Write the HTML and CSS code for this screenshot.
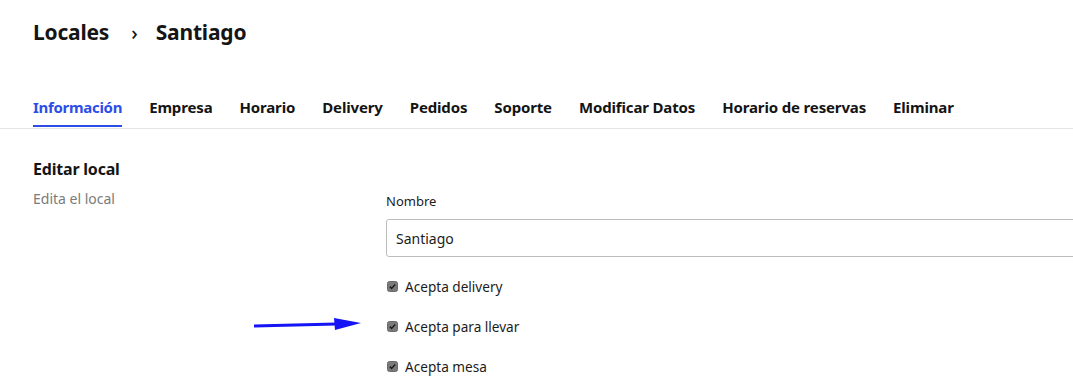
FILE: index.html
```html
<!DOCTYPE html>
<html lang="es">
<head>
<meta charset="utf-8">
<title>Locales › Santiago</title>
<link rel="stylesheet" href="styles.css">
</head>
<body>
<div class="page">
  <header class="crumbs">
    <span class="crumb">Locales</span>
    <span class="sep">›</span>
    <span class="crumb">Santiago</span>
  </header>
  <nav class="tabs">
    <a class="tab active">Información</a>
    <a class="tab">Empresa</a>
    <a class="tab">Horario</a>
    <a class="tab">Delivery</a>
    <a class="tab">Pedidos</a>
    <a class="tab">Soporte</a>
    <a class="tab">Modificar Datos</a>
    <a class="tab">Horario de reservas</a>
    <a class="tab">Eliminar</a>
  </nav>
  <section class="content">
    <div class="intro">
      <h2 class="intro-title">Editar local</h2>
      <p class="intro-desc">Edita el local</p>
    </div>
    <form class="form">
      <label class="field-label">Nombre</label>
      <div class="input">Santiago</div>
      <div class="check-row">
        <svg class="cb" viewBox="0 0 11 11"><rect x="0.5" y="0.5" width="10" height="10" rx="2" fill="#7a7a7a" stroke="#6a6a6a"/><path d="M2.8 5.6 L4.6 7.4 L8.2 3.4" fill="none" stroke="#1e1e1e" stroke-width="1.5"/></svg>
        <span>Acepta delivery</span>
      </div>
      <div class="check-row">
        <svg class="cb" viewBox="0 0 11 11"><rect x="0.5" y="0.5" width="10" height="10" rx="2" fill="#7a7a7a" stroke="#6a6a6a"/><path d="M2.8 5.6 L4.6 7.4 L8.2 3.4" fill="none" stroke="#1e1e1e" stroke-width="1.5"/></svg>
        <span>Acepta para llevar</span>
        <svg class="arrow" viewBox="0 0 110 16"><path d="M0 10 L82 8" stroke="#1414f5" stroke-width="3" fill="none"/><path d="M80 2 L107 7 L81 14 Z" fill="#1414f5"/></svg>
      </div>
      <div class="check-row">
        <svg class="cb" viewBox="0 0 11 11"><rect x="0.5" y="0.5" width="10" height="10" rx="2" fill="#7a7a7a" stroke="#6a6a6a"/><path d="M2.8 5.6 L4.6 7.4 L8.2 3.4" fill="none" stroke="#1e1e1e" stroke-width="1.5"/></svg>
        <span>Acepta mesa</span>
      </div>
    </form>
  </section>
</div>
</body>
</html>
```

FILE: styles.css
```css
html, body {
  margin: 0;
  padding: 0;
  background: #ffffff;
  overflow: hidden;
}
body {
  font-family: "Noto Sans", "Open Sans", sans-serif;
  color: #151515;
}
.page {
  width: 1073px;
  height: 389px;
  overflow: hidden;
}
.crumbs {
  display: flex;
  align-items: baseline;
  padding: 18px 0 0 33px;
  height: 76px;
  box-sizing: border-box;
}
.crumb {
  font-size: 21px;
  font-weight: 700;
  letter-spacing: -0.2px;
}
.sep {
  font-size: 20px;
  font-weight: 500;
  margin: 0 18px 0 22px;
}
.tabs {
  display: flex;
  gap: 27px;
  padding: 0 0 0 33px;
  border-bottom: 1px solid #e6e6e6;
  height: 53px;
  box-sizing: border-box;
}
.tab {
  font-size: 15px;
  font-weight: 700;
  letter-spacing: -0.15px;
  color: #141414;
  padding-top: 21px;
  box-sizing: border-box;
  height: 52px;
}
.tab.active {
  color: #2c4ee6;
  border-bottom: 2px solid #2c4ee6;
  height: 51px;
  letter-spacing: -0.3px;
}
.content {
  display: flex;
  padding: 29px 0 0 33px;
}
.intro {
  width: 353px;
  flex: none;
}
.intro-title {
  margin: 0;
  font-size: 16px;
  font-weight: 700;
  line-height: 22px;
  letter-spacing: -0.2px;
}
.intro-desc {
  margin: 9px 0 0;
  font-size: 14px;
  line-height: 20px;
  color: #7b7b7b;
}
.form {
  flex: 1;
  padding-top: 34px;
  margin-right: -40px;
}
.field-label {
  display: block;
  font-size: 13px;
  line-height: 18px;
  color: #1c1c1c;
}
.input {
  margin-top: 9px;
  height: 38px;
  box-sizing: border-box;
  border: 1px solid #bdbdbd;
  border-radius: 3px;
  padding: 0 9px;
  display: flex;
  align-items: center;
  font-size: 14px;
  color: #1c1c1c;
}
.check-row {
  position: relative;
  display: flex;
  align-items: center;
  gap: 7px;
  height: 20px;
  margin-top: 20px;
  padding-left: 1px;
  font-size: 13.6px;
  color: #1c1c1c;
}
.input + .check-row {
  margin-top: 19px;
}
.cb {
  width: 11px;
  height: 11px;
  flex: none;
}
.arrow {
  position: absolute;
  left: -132px;
  top: 0px;
  width: 110px;
  height: 16px;
}
```
